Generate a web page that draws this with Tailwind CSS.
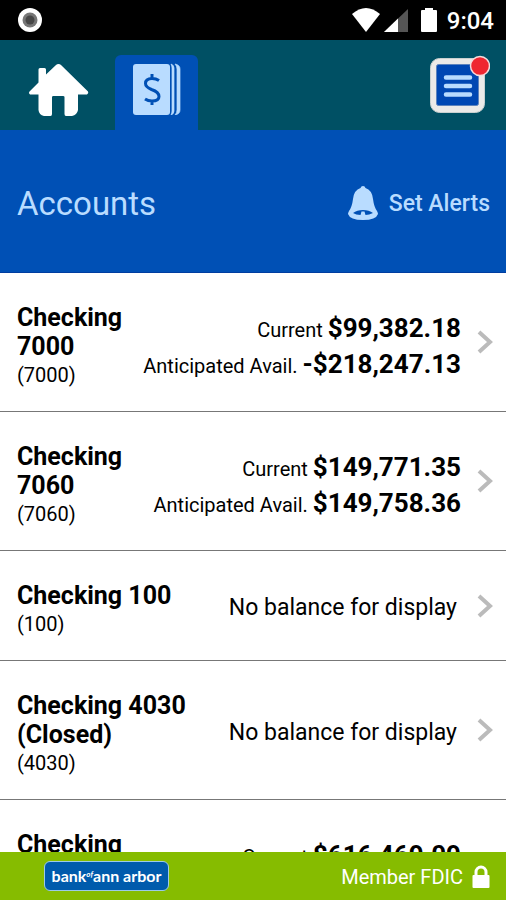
<!DOCTYPE html>
<html lang="en">
<head>
  <meta charset="UTF-8" />
  <meta name="viewport" content="width=device-width, initial-scale=1.0" />
  <title>Accounts - Bank of Ann Arbor</title>
  <script src="https://cdn.jsdelivr.net/npm/@tailwindcss/browser@4"></script>
</head>
<body class="flex h-screen flex-col overflow-hidden bg-white font-[Roboto,sans-serif] text-black">
  <!-- Status bar -->
  <div class="flex h-10 shrink-0 items-center justify-between bg-black pr-3 pl-4 text-white">
    <svg class="size-7" viewBox="0 0 28 28" aria-hidden="true">
      <circle cx="14" cy="14" r="12" fill="#fff" />
      <circle cx="14" cy="14" r="7.5" fill="#777" />
      <circle cx="14" cy="14" r="4.5" fill="#484848" />
    </svg>
    <div class="flex items-center">
      <svg class="h-7 w-22" viewBox="0 0 88 28" aria-hidden="true">
        <path d="M1 8Q15-4 29 8L15 26Z" fill="#fff" />
        <path d="M57 3v23H33Z" fill="#555" />
        <path d="M47 12.500v13.500H33Z" fill="#fff" />
        <path d="M74 2h8v2h3q1 0 1 1v20q0 1-1 1H71q-1 0-1-1V5q0-1 1-1h3z" fill="#fff" />
      </svg>
      <span class="ml-2 pt-0.5 text-2xl font-medium">9:04</span>
    </div>
  </div>

  <!-- Tabs -->
  <nav class="flex h-[90px] shrink-0 items-end bg-[#005064] pr-4">
    <a href="#home" aria-label="Home" class="flex h-21 w-[115px] items-center justify-center">
      <svg class="h-14 w-16" viewBox="0 0 64 56" aria-hidden="true">
        <path d="M32.500 4Q34 4 35 5L62 31.500Q63 33 61 34.500H52V50Q51 55 46 56H40Q38.500 56 38.500 54V37Q38.500 36 37 36H27.500Q26 36 26 37V54Q26 56 24.500 56H18Q13 55 12.500 50V34.500H4Q2 33 3.500 31.500L12.500 22.500V9.500Q12.500 8 14 8H18.500Q20 8 20 9.500V14.500L30 5Q31 4 32.500 4Z" fill="#fff" />
      </svg>
    </a>
    <a href="#accounts" aria-label="Accounts" class="flex h-[75px] w-[83px] items-start justify-center rounded-t-md bg-[#0050b5] pt-2">
      <svg class="h-13 w-12" viewBox="0 0 48 52" aria-hidden="true">
        <g fill="#b9dcff">
          <rect x="0" y="1" width="37" height="51" rx="3" />
          <path d="M38 1q3 1 3 4v43q0 3-3 4q1-2 1-4V5q0-2-1-4ZM42 1q5 1 5 5v41q0 4-5 5q2-2 2-5V6q0-3-2-5Z" stroke="#b9dcff" stroke-width=".7" />
        </g>
        <path d="M26 17.500Q23 15.500 19 15.500Q12.500 15.500 12.500 20.500Q12.500 24 18.500 26.500Q26 29 26 33.500Q26 38 19 38Q15 38 12 36M19 11v5M19 37.500v4.500" fill="none" stroke="#0050b5" stroke-width="3" />
      </svg>
    </a>
    <button type="button" aria-label="Menu" class="mb-3 ml-auto">
      <svg class="h-16 w-16" viewBox="0 0 64 64" aria-hidden="true">
        <rect x="4.500" y="4.500" width="54" height="54" rx="9" fill="#eceae8" stroke="#c9d0d0" />
        <rect x="10.500" y="10.500" width="42" height="41" rx="2" fill="#0047b3" stroke="#5d83bd" />
        <path d="M20 23.500h24M20 32h24M20 40.500h24" stroke="#b9dcff" stroke-width="4.500" stroke-linecap="round" />
        <circle cx="54" cy="12" r="9.500" fill="#ef2630" stroke="#f4dcdc" stroke-width="1.500" />
      </svg>
    </button>
  </nav>

  <!-- Page title -->
  <header class="flex h-[143px] shrink-0 items-center justify-between border-b border-[#003da0] bg-[#0050b5] pt-1.5 pr-4 pl-[17px] text-[#b9dcff]">
    <h1 class="text-[33px]">Accounts</h1>
    <button type="button" class="flex items-center gap-2.5 text-[23px] font-medium">
      <svg class="h-9 w-8" viewBox="0 0 32 36" aria-hidden="true">
        <path d="M16 0Q18 0 18.500 2Q25 4 26 13Q27 21 30 25Q31 27 31 28Q29 34 16 34Q3 34 1 28Q1 27 2 25Q5 21 6 13Q7 4 13.500 2Q14 0 16 0Z" fill="#b9dcff" />
        <path d="M6 27Q10 24 16 24Q22 24 26 27Q22 29 18.500 29L17.500 25.500H14.500L13.500 29Q9 29 6 27Z" fill="#0050b5" />
      </svg>
      Set Alerts
    </button>
  </header>

  <!-- Account list -->
  <main class="min-h-0 grow overflow-hidden">
    <ul>
      <li class="border-b border-[#777]">
        <a href="#7000" class="flex items-center pr-[13px] pl-[17px]">
          <div class="w-28 shrink-0 pt-[30px] pb-[21px]">
            <h2 class="text-[25px] leading-[29px] font-bold">Checking 7000</h2>
            <p class="text-xl leading-[29px]">(7000)</p>
          </div>
          <dl class="ml-auto pt-2 text-right text-[26px] leading-9 whitespace-nowrap">
            <div><dt class="inline text-xl leading-5">Current </dt><dd class="inline font-bold">$99,382.18</dd></div>
            <div><dt class="inline text-xl leading-5">Anticipated Avail. </dt><dd class="inline font-bold">-$218,247.13</dd></div>
          </dl>
          <svg class="ml-4 h-6 w-4 shrink-0" viewBox="0 0 16 24" fill="none" stroke="#bbb" stroke-width="4" aria-hidden="true"><path d="M2 2L13 12L2 22" /></svg>
        </a>
      </li>
      <li class="border-b border-[#777]">
        <a href="#7060" class="flex items-center pr-[13px] pl-[17px]">
          <div class="w-28 shrink-0 pt-[30px] pb-[21px]">
            <h2 class="text-[25px] leading-[29px] font-bold">Checking 7060</h2>
            <p class="text-xl leading-[29px]">(7060)</p>
          </div>
          <dl class="ml-auto pt-2 text-right text-[26px] leading-9 whitespace-nowrap">
            <div><dt class="inline text-xl leading-5">Current </dt><dd class="inline font-bold">$149,771.35</dd></div>
            <div><dt class="inline text-xl leading-5">Anticipated Avail. </dt><dd class="inline font-bold">$149,758.36</dd></div>
          </dl>
          <svg class="ml-4 h-6 w-4 shrink-0" viewBox="0 0 16 24" fill="none" stroke="#bbb" stroke-width="4" aria-hidden="true"><path d="M2 2L13 12L2 22" /></svg>
        </a>
      </li>
      <li class="border-b border-[#777]">
        <a href="#100" class="flex items-center pr-[13px] pl-[17px]">
          <div class="w-48 shrink-0 pt-[30px] pb-[21px]">
            <h2 class="text-[25px] leading-[29px] font-bold">Checking 100</h2>
            <p class="text-xl leading-[29px]">(100)</p>
          </div>
          <p class="ml-auto pt-1.5 text-[23px] whitespace-nowrap">No balance for display</p>
          <svg class="ml-5 h-6 w-4 shrink-0" viewBox="0 0 16 24" fill="none" stroke="#bbb" stroke-width="4" aria-hidden="true"><path d="M2 2L13 12L2 22" /></svg>
        </a>
      </li>
      <li class="border-b border-[#777]">
        <a href="#4030" class="flex items-center pr-[13px] pl-[17px]">
          <div class="w-48 shrink-0 pt-[30px] pb-[21px]">
            <h2 class="text-[25px] leading-[29px] font-bold">Checking 4030 (Closed)</h2>
            <p class="text-xl leading-[29px]">(4030)</p>
          </div>
          <p class="ml-auto pt-1.5 text-[23px] whitespace-nowrap">No balance for display</p>
          <svg class="ml-5 h-6 w-4 shrink-0" viewBox="0 0 16 24" fill="none" stroke="#bbb" stroke-width="4" aria-hidden="true"><path d="M2 2L13 12L2 22" /></svg>
        </a>
      </li>
      <li class="border-b border-[#777]">
        <a href="#next" class="flex items-center pr-[13px] pl-[17px]">
          <div class="h-[138px] w-28 shrink-0 pt-[30px] pb-[21px]">
            <h2 class="text-[25px] leading-[29px] font-bold">Checking</h2>
          </div>
          <dl class="ml-auto h-20 pt-2 text-right text-[26px] leading-9 whitespace-nowrap">
            <div><dt class="inline text-xl leading-5">Current </dt><dd class="inline font-bold">$616,469.09</dd></div>
          </dl>
          <svg class="ml-4 h-6 w-4 shrink-0" viewBox="0 0 16 24" fill="none" stroke="#bbb" stroke-width="4" aria-hidden="true"><path d="M2 2L13 12L2 22" /></svg>
        </a>
      </li>
    </ul>
  </main>

  <!-- Footer -->
  <footer class="flex h-12 shrink-0 items-center justify-between bg-[#86bc00] pr-[15px] pl-11 text-white">
    <div class="flex h-[30px] w-[125px] items-center justify-center rounded-md border border-[#9ccbe8] bg-[#005bac] font-[Lato,sans-serif] text-base font-bold whitespace-nowrap">
      bank<span class="mb-1 text-[8px] italic">of</span>ann arbor
    </div>
    <div class="flex items-center gap-2 pt-0.5 text-xl">
      Member FDIC
      <svg class="h-6 w-5" viewBox="0 0 20 24" aria-hidden="true">
        <path d="M5 11V7a5 5 0 0 1 10 0v4" fill="none" stroke="#fff" stroke-width="3" />
        <rect x="1.500" y="10" width="17" height="13" rx="1" fill="#fff" />
      </svg>
    </div>
  </footer>
</body>
</html>
